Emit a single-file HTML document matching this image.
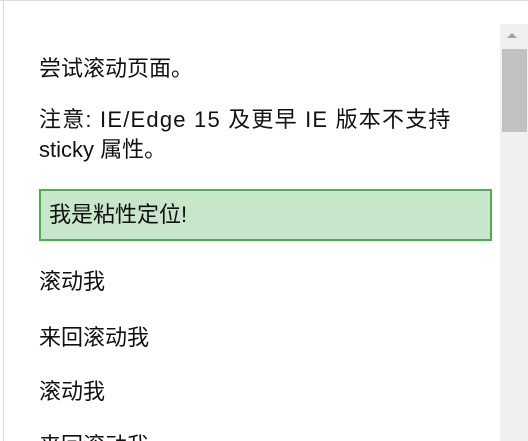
<!DOCTYPE html>
<html><head><meta charset="utf-8"><style>
html,body{margin:0;padding:0;width:528px;height:441px;overflow:hidden;background:#fff}
body{position:relative;font-family:"Liberation Sans","Noto Sans CJK SC",sans-serif;font-size:22px;color:#111}
.t{position:absolute;left:39px;white-space:nowrap;line-height:29px}
#topb{position:absolute;left:0;top:0;width:528px;height:1px;background:#ddd}
#leftb{position:absolute;left:3px;top:0;width:1px;height:441px;background:#ddd}
#track{position:absolute;left:500px;top:24px;width:28px;height:417px;background:#f0f0f0}
#thumb{position:absolute;left:502px;top:49px;width:25px;height:83px;background:#c1c1c1}
#arr{position:absolute;left:507px;top:33px;width:0;height:0;border-left:5px solid transparent;border-right:5px solid transparent;border-bottom:5px solid #a3a3a3}
#sticky{position:absolute;left:39px;top:189px;width:449px;height:48px;border:2px solid #4caf50;background:#c8e6c9}
#sticky span{position:absolute;left:8px;top:9px;line-height:29px;white-space:nowrap}
</style></head><body>
<div id="topb"></div><div id="leftb"></div>
<div id="track"></div><div id="thumb"></div><div id="arr"></div>
<div class="t" style="top:54px">尝试滚动页面。</div>
<div class="t" style="top:105px;letter-spacing:1.2px">注意: IE/Edge 15 及更早 IE 版本不支持</div>
<div class="t" style="top:135px">sticky 属性。</div>
<div id="sticky"><span>我是粘性定位!</span></div>
<div class="t" style="top:267px">滚动我</div>
<div class="t" style="top:323px">来回滚动我</div>
<div class="t" style="top:377px">滚动我</div>
<div class="t" style="top:431px">来回滚动我</div>
</body></html>
